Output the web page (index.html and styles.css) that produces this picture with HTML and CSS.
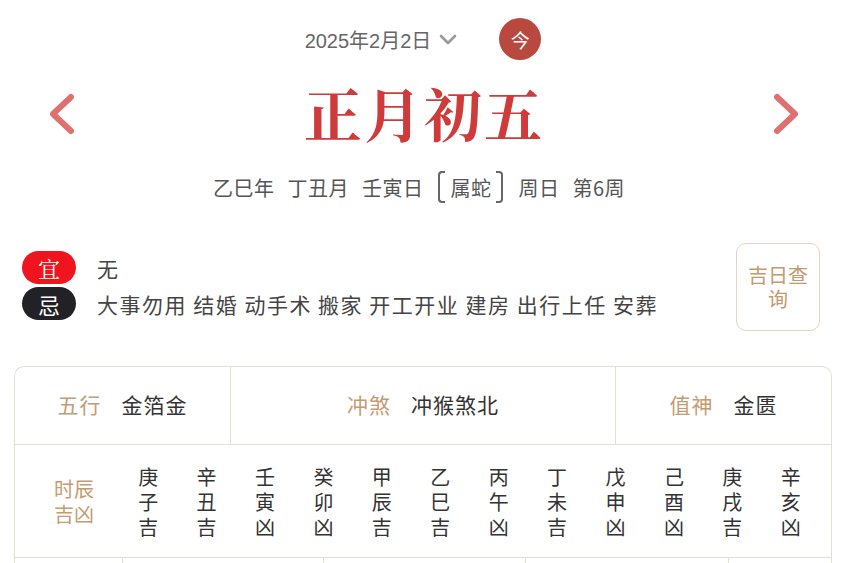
FILE: index.html
```html
<!DOCTYPE html>
<html lang="zh-CN">
<head>
<meta charset="utf-8">
<title>黄历</title>
<link rel="stylesheet" href="styles.css">
</head>
<body>
<div class="page">
  <div class="top">
    <div class="date">2025年2月2日
      <svg class="caret" width="18" height="12" viewBox="0 0 18 12"><path d="M2 2 L9 9 L16 2" fill="none" stroke="#999" stroke-width="2.6" stroke-linecap="round" stroke-linejoin="round"/></svg>
    </div>
    <div class="today">今</div>
  </div>

  <div class="title-row">
    <svg class="arrow" width="32" height="44" viewBox="0 0 32 44"><path d="M25 5 L7 22 L25 39" fill="none" stroke="#e07070" stroke-width="6" stroke-linecap="round" stroke-linejoin="round"/></svg>
    <h1 class="lunar">正月初五</h1>
    <svg class="arrow" width="32" height="44" viewBox="0 0 32 44"><path d="M7 5 L25 22 L7 39" fill="none" stroke="#e07070" stroke-width="6" stroke-linecap="round" stroke-linejoin="round"/></svg>
  </div>

  <div class="ganzhi">
    <span>乙巳年</span>
    <span>丁丑月</span>
    <span>壬寅日</span>
    <span class="zodiac"><i class="br br-l"></i>属蛇<i class="br br-r"></i></span>
    <span>周日</span>
    <span>第6周</span>
  </div>

  <div class="yiji">
    <div class="yiji-list">
      <div class="yiji-row"><span class="badge badge-yi">宜</span><span class="yiji-text">无</span></div>
      <div class="yiji-row"><span class="badge badge-ji">忌</span><span class="yiji-text">大事勿用 结婚 动手术 搬家 开工开业 建房 出行上任 安葬</span></div>
    </div>
    <div class="lucky-btn">吉日查<br>询</div>
  </div>

  <div class="table">
    <div class="row row-info">
      <div class="cell c1"><span class="label">五行</span><span class="value">金箔金</span></div>
      <div class="cell c2"><span class="label">冲煞</span><span class="value">冲猴煞北</span></div>
      <div class="cell c3"><span class="label">值神</span><span class="value">金匮</span></div>
    </div>
    <div class="row row-hours">
      <div class="hours-label">时辰<br>吉凶</div>
      <div class="hours">
        <div class="hour">庚<br>子<br>吉</div>
        <div class="hour">辛<br>丑<br>吉</div>
        <div class="hour">壬<br>寅<br>凶</div>
        <div class="hour">癸<br>卯<br>凶</div>
        <div class="hour">甲<br>辰<br>吉</div>
        <div class="hour">乙<br>巳<br>吉</div>
        <div class="hour">丙<br>午<br>凶</div>
        <div class="hour">丁<br>未<br>吉</div>
        <div class="hour">戊<br>申<br>凶</div>
        <div class="hour">己<br>酉<br>凶</div>
        <div class="hour">庚<br>戌<br>吉</div>
        <div class="hour">辛<br>亥<br>凶</div>
      </div>
    </div>
    <div class="row row-more">
      <div class="m m1"></div>
      <div class="m m2"></div>
      <div class="m m3"></div>
      <div class="m m4"></div>
      <div class="m m5"></div>
    </div>
  </div>
</div>
</body>
</html>
```

FILE: styles.css
```css
html, body {
  margin: 0;
  padding: 0;
  background: #ffffff;
}
body {
  font-family: "Noto Sans CJK SC", "Noto Sans", sans-serif;
  color: #333;
  overflow: hidden;
}
.page {
  width: 844px;
}

/* top date bar */
.top {
  height: 78px;
  display: flex;
  align-items: center;
  justify-content: center;
  gap: 42px;
}
.date {
  display: flex;
  align-items: center;
  gap: 8px;
  font-size: 20px;
  color: #666;
  font-family: "Liberation Sans", "Noto Sans CJK SC", sans-serif;
  margin-left: 2px;
}
.caret {
  margin-top: 1px;
}
.today {
  width: 42px;
  height: 42px;
  border-radius: 50%;
  background: #b9483e;
  color: #fff;
  font-size: 19px;
  display: flex;
  align-items: center;
  justify-content: center;
}

/* lunar title */
.title-row {
  height: 72px;
  display: flex;
  align-items: center;
  justify-content: space-between;
  padding: 0 42px 0 46px;
}
.lunar {
  margin: -5px 0 0 0;
  font-family: "Noto Serif CJK SC", "Noto Serif CJK", "Noto Sans CJK SC", serif;
  font-weight: 700;
  font-size: 58px;
  letter-spacing: 2px;
  line-height: 72px;
  color: #cf3a3a;
}

/* ganzhi line */
.ganzhi {
  margin-top: 22px;
  height: 30px;
  display: flex;
  align-items: center;
  justify-content: center;
  gap: 13px;
  font-size: 20px;
  letter-spacing: 0.5px;
  color: #555;
  padding-right: 6px;
}
.zodiac {
  display: flex;
  align-items: center;
  gap: 5px;
  padding: 0 2px;
}
.br {
  display: block;
  width: 5px;
  height: 28px;
  border: 2.5px solid #666;
}
.br-l {
  border-right: none;
  border-radius: 4px 0 0 4px;
}
.br-r {
  border-left: none;
  border-radius: 0 4px 4px 0;
}

/* yi / ji */
.yiji {
  margin-top: 41px;
  height: 88px;
  display: flex;
  align-items: center;
  justify-content: space-between;
  padding: 0 24px 0 22px;
}
.yiji-list {
  display: flex;
  flex-direction: column;
  gap: 3px;
  margin-top: -3px;
}
.yiji-row {
  display: flex;
  align-items: center;
  gap: 21px;
}
.badge {
  width: 54px;
  height: 33px;
  border-radius: 17px;
  color: #fff;
  font-size: 22px;
  display: flex;
  align-items: center;
  justify-content: center;
}
.badge-yi {
  background: #f0141f;
  font-family: "Noto Serif CJK SC", "Noto Sans CJK SC", serif;
}
.badge-ji {
  background: #222226;
}
.yiji-text {
  font-size: 21px;
  letter-spacing: 1.5px;
  color: #444;
}
.lucky-btn {
  width: 82px;
  height: 86px;
  border: 1.5px solid #e4d5c2;
  border-radius: 10px;
  color: #c39a6e;
  font-size: 20px;
  line-height: 24px;
  text-align: center;
  display: flex;
  align-items: center;
  justify-content: center;
}

/* table */
.table {
  margin: 35px 12px 0 14px;
  border: 1.5px solid #e2dfd5;
  border-bottom: none;
  border-radius: 10px 10px 0 0;
}
.row {
  display: flex;
}
.row-info {
  height: 77px;
  border-bottom: 1.5px solid #e2dfd5;
}
.cell {
  display: flex;
  align-items: center;
  justify-content: center;
  gap: 20px;
  font-size: 21px;
  letter-spacing: 1px;
  padding-bottom: 3px;
}
.c1 { width: 215px; border-right: 1.5px solid #e2dfd5; }
.c2 { width: 384px; border-right: 1.5px solid #e2dfd5; }
.c3 { flex: 1; }
.label {
  color: #c49c72;
}
.value {
  color: #333;
}
.row-hours {
  height: 112px;
  align-items: center;
  padding: 0 11px 0 37px;
  border-bottom: 1.5px solid #e2dfd5;
}
.hours-label {
  width: 44px;
  margin-right: 23px;
  font-size: 20px;
  line-height: 25px;
  color: #c49c72;
  text-align: center;
}
.hours {
  flex: 1;
  display: grid;
  grid-template-columns: repeat(12, 1fr);
}
.hour {
  text-align: center;
  font-size: 20px;
  line-height: 25px;
  color: #333;
}
.row-more {
  height: 40px;
}
.m {
  border-right: 1.5px solid #e2dfd5;
}
.m1 { width: 107px; }
.m2 { width: 200px; }
.m3 { width: 201px; }
.m4 { width: 202px; }
.m5 { flex: 1; border-right: none; }
```
